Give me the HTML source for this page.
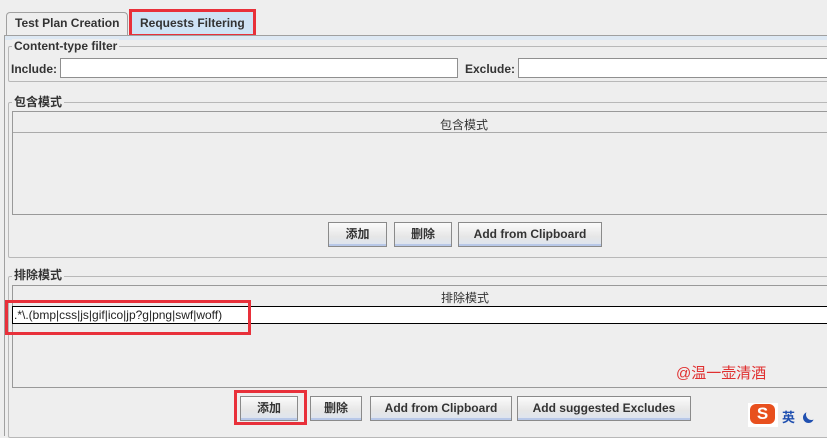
<!DOCTYPE html>
<html><head><meta charset="utf-8"><style>
body{margin:0;width:827px;height:427px;background:#eeeeee;position:relative;overflow:hidden;font-family:"Liberation Sans","Noto Sans CJK SC",sans-serif;font-size:12px;color:#333}
.a{position:absolute}
.b{font-weight:bold}
.btn{position:absolute;height:25px;border:1px solid #8a8a8a;background:linear-gradient(#fbfbfb,#e6e6e6 60%,#dde4f0);box-sizing:border-box;text-align:center;line-height:23px;font-weight:bold;color:#333;box-shadow:inset 0 -2px 0 #b8c8e8}
.fs{position:absolute;border:1px solid #b8b8b8;border-radius:2px}
.lg{position:absolute;background:#eeeeee;padding:0 2px;font-weight:bold;color:#333}
.inp{position:absolute;background:#fff;border:1px solid #8f8f8f;height:20px;box-sizing:border-box}
.red{position:absolute;border:3px solid #e8303a;box-sizing:border-box}
</style></head><body>
<!-- tabs -->
<div class="a" style="left:6px;top:12px;width:122px;height:23px;border:1px solid #a0a0a0;border-bottom:none;border-radius:4px 4px 0 0;box-sizing:border-box;background:#eeeeee"></div>
<div class="a b" style="left:15px;top:16px">Test Plan Creation</div>
<div class="a" style="left:131px;top:11px;width:122px;height:25px;background:#cfe3f5"></div>
<div class="a b" style="left:140px;top:16px">Requests Filtering</div>
<div class="red" style="left:129px;top:9px;width:127px;height:28px"></div>
<div class="a" style="left:4px;top:35px;width:830px;height:400px;border-left:1px solid #a0a0a0;border-top:1px solid #a0a0a0"></div>
<div class="a" style="left:5px;top:36px;width:830px;height:4px;background:#dde8f3"></div>
<!-- content type -->
<div class="fs" style="left:8px;top:46px;width:830px;height:34px"></div>
<div class="lg" style="left:12px;top:39px">Content-type filter</div>
<div class="a b" style="left:11px;top:62px">Include:</div>
<div class="inp" style="left:60px;top:58px;width:398px"></div>
<div class="a b" style="left:465px;top:62px">Exclude:</div>
<div class="inp" style="left:518px;top:58px;width:320px"></div>
<!-- 包含模式 -->
<div class="fs" style="left:8px;top:102px;width:830px;height:154px"></div>
<div class="lg" style="left:12px;top:93px">包含模式</div>
<div class="a" style="left:12px;top:111px;width:830px;height:104px;border:1px solid #999;box-sizing:border-box"></div>
<div class="a" style="left:13px;top:112px;width:830px;height:21px;border-bottom:1px solid #aaa;box-sizing:border-box;background:#eeeeee"></div>
<div class="a" style="left:440px;top:116px;color:#333">包含模式</div>
<div class="btn" style="left:328px;top:222px;width:59px">添加</div>
<div class="btn" style="left:394px;top:222px;width:58px">删除</div>
<div class="btn" style="left:458px;top:222px;width:144px">Add from Clipboard</div>
<!-- 排除模式 -->
<div class="fs" style="left:8px;top:276px;width:830px;height:160px"></div>
<div class="lg" style="left:12px;top:266px">排除模式</div>
<div class="a" style="left:12px;top:285px;width:830px;height:103px;border:1px solid #999;box-sizing:border-box"></div>
<div class="a" style="left:13px;top:286px;width:830px;height:20px;background:#eeeeee"></div>
<div class="a" style="left:441px;top:289px;color:#333">排除模式</div>
<div class="a" style="left:12px;top:306px;width:830px;height:18px;background:#fff;border:1px solid #000;box-sizing:border-box"></div>
<div class="a" style="left:14px;top:308px;color:#222">.*\.(bmp|css|js|gif|ico|jp?g|png|swf|woff)</div>
<div class="red" style="left:5px;top:300px;width:246px;height:35px"></div>
<div class="a" style="left:676px;top:362px;color:#e03030;font-size:15px">@温一壶清酒</div>
<div class="btn" style="left:240px;top:396px;width:58px">添加</div>
<div class="red" style="left:234px;top:390px;width:73px;height:35px"></div>
<div class="btn" style="left:310px;top:396px;width:52px">删除</div>
<div class="btn" style="left:370px;top:396px;width:142px">Add from Clipboard</div>
<div class="btn" style="left:517px;top:396px;width:174px">Add suggested Excludes</div>
<!-- sogou -->
<div class="a" style="left:748px;top:403px;width:30px;height:24px;background:#fff"></div>
<div class="a" style="left:750px;top:404px;width:25px;height:20px;background:#e8501e;border-radius:6px;color:#fff;font-weight:bold;font-size:17px;line-height:20px;text-align:center">S</div>
<div class="a b" style="left:782px;top:407px;color:#2050b0;font-size:13px">英</div>
<div class="a" style="left:806px;top:409px;width:11px;height:11px;border-radius:50%;box-shadow:-3px 3px 0 0 #2050b0"></div>
</body></html>
